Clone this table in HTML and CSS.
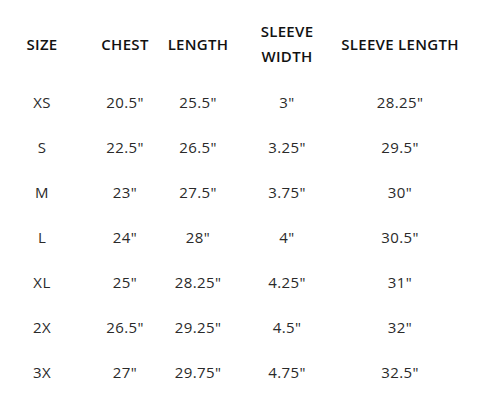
FILE: index.html
```html
<!DOCTYPE html>
<html>
<head>
<meta charset="utf-8">
<link rel="stylesheet" href="styles.css">
</head>
<body>
<div class="chart">
  <div class="row head">
    <div class="cell">SIZE</div>
    <div class="cell">CHEST</div>
    <div class="cell">LENGTH</div>
    <div class="cell two">SLEEVE<br>WIDTH</div>
    <div class="cell">SLEEVE LENGTH</div>
  </div>
  <div class="row"><div class="cell">XS</div><div class="cell">20.5"</div><div class="cell">25.5"</div><div class="cell">3"</div><div class="cell">28.25"</div></div>
  <div class="row"><div class="cell">S</div><div class="cell">22.5"</div><div class="cell">26.5"</div><div class="cell">3.25"</div><div class="cell">29.5"</div></div>
  <div class="row"><div class="cell">M</div><div class="cell">23"</div><div class="cell">27.5"</div><div class="cell">3.75"</div><div class="cell">30"</div></div>
  <div class="row"><div class="cell">L</div><div class="cell">24"</div><div class="cell">28"</div><div class="cell">4"</div><div class="cell">30.5"</div></div>
  <div class="row"><div class="cell">XL</div><div class="cell">25"</div><div class="cell">28.25"</div><div class="cell">4.25"</div><div class="cell">31"</div></div>
  <div class="row"><div class="cell">2X</div><div class="cell">26.5"</div><div class="cell">29.25"</div><div class="cell">4.5"</div><div class="cell">32"</div></div>
  <div class="row"><div class="cell">3X</div><div class="cell">27"</div><div class="cell">29.75"</div><div class="cell">4.75"</div><div class="cell">32.5"</div></div>
</div>
</body>
</html>
```
FILE: styles.css
```css
html, body {
  margin: 0;
  padding: 0;
  background: #ffffff;
}
body {
  padding: 8px 0 0 8px;
  font-family: "Open Sans", "Liberation Sans", sans-serif;
  font-size: 15px;
  color: #2a2a2a;
}
.chart {
  display: flex;
  flex-direction: column;
}
.row {
  display: grid;
  grid-template-columns: 68px 98px 48px 130px 96px;
  height: 45px;
  align-items: center;
  letter-spacing: 0.4px;
}
.row.head {
  height: 72px;
  font-weight: 600;
  color: #111111;
  letter-spacing: 0.3px;
}
.cell {
  display: flex;
  justify-content: center;
  text-align: center;
  white-space: nowrap;
  line-height: 25px;
}
.cell.two {
  white-space: normal;
}
```
